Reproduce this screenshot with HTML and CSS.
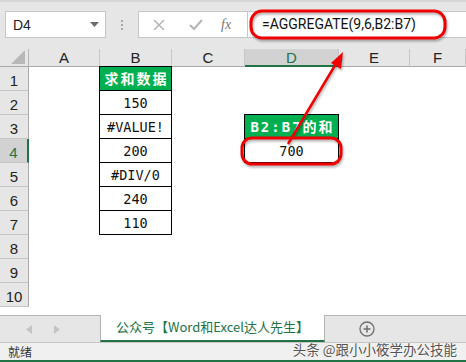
FILE: index.html
```html
<!DOCTYPE html>
<html lang="zh-CN">
<head>
    <meta charset="UTF-8">
    <title>AGGREGATE</title>
    <link rel="stylesheet" href="styles.css">
</head>
<body>
<div id="app">
    <div class="formula-bar">
        <div class="name-box">
            <span>D4</span>
            <svg width="9" height="5" viewBox="0 0 9 5"><path d="M0 0H9L4.5 5Z" fill="#6b6b6b"/></svg>
        </div>
        <div class="grip"><i></i><i></i><i></i></div>
        <div class="fx-box">
            <div class="fx-btns">
                <svg width="12" height="12" viewBox="0 0 12 12"><path d="M1 1L11 11M11 1L1 11" stroke="#b4b4b4" stroke-width="1.5"/></svg>
                <svg width="14" height="12" viewBox="0 0 14 12"><path d="M1 6L5 10L13 1" stroke="#b4b4b4" stroke-width="2" fill="none"/></svg>
                <span class="fx">fx</span>
            </div>
            <div class="formula">=AGGREGATE(9,6,B2:B7)</div>
        </div>
    </div>

    <div class="sheet">
        <div class="corner"><svg width="14" height="14" viewBox="0 0 14 14"><path d="M14 0V14H0Z" fill="#b8b8b8"/></svg></div>
        <div class="col-head">A</div>
        <div class="col-head">B</div>
        <div class="col-head">C</div>
        <div class="col-head active">D</div>
        <div class="col-head">E</div>
        <div class="col-head">F</div>

        <div class="row-head">1</div><div class="cell"></div><div class="cell box top title">求和数据</div><div class="cell"></div><div class="cell"></div><div class="cell"></div><div class="cell"></div>
        <div class="row-head">2</div><div class="cell"></div><div class="cell box">150</div><div class="cell"></div><div class="cell"></div><div class="cell"></div><div class="cell"></div>
        <div class="row-head">3</div><div class="cell"></div><div class="cell box">#VALUE!</div><div class="cell"></div><div class="cell box top title">B2:B7的和</div><div class="cell"></div><div class="cell"></div>
        <div class="row-head active">4</div><div class="cell"></div><div class="cell box">200</div><div class="cell"></div><div class="cell box">700</div><div class="cell"></div><div class="cell"></div>
        <div class="row-head">5</div><div class="cell"></div><div class="cell box">#DIV/0</div><div class="cell"></div><div class="cell"></div><div class="cell"></div><div class="cell"></div>
        <div class="row-head">6</div><div class="cell"></div><div class="cell box">240</div><div class="cell"></div><div class="cell"></div><div class="cell"></div><div class="cell"></div>
        <div class="row-head">7</div><div class="cell"></div><div class="cell box">110</div><div class="cell"></div><div class="cell"></div><div class="cell"></div><div class="cell"></div>
        <div class="row-head">8</div><div class="cell"></div><div class="cell"></div><div class="cell"></div><div class="cell"></div><div class="cell"></div><div class="cell"></div>
        <div class="row-head">9</div><div class="cell"></div><div class="cell"></div><div class="cell"></div><div class="cell"></div><div class="cell"></div><div class="cell"></div>
        <div class="row-head">10</div><div class="cell"></div><div class="cell"></div><div class="cell"></div><div class="cell"></div><div class="cell"></div><div class="cell"></div>
    </div>

    <div class="tabs">
        <div class="nav">
            <svg width="6" height="9" viewBox="0 0 6 9"><path d="M6 0V9L0 4.5Z" fill="#c4c4c4"/></svg>
            <svg width="6" height="9" viewBox="0 0 6 9"><path d="M0 0V9L6 4.5Z" fill="#c4c4c4"/></svg>
        </div>
        <div class="tab">公众号【Word和Excel达人先生】</div>
        <div class="tab-rest">
            <svg width="16" height="16" viewBox="0 0 16 16"><circle cx="8" cy="8" r="7" fill="none" stroke="#6e6e6e" stroke-width="1.3"/><path d="M8 4.5V11.5M4.5 8H11.5" stroke="#6e6e6e" stroke-width="1.5"/></svg>
        </div>
    </div>

    <div class="status">
        <span>就绪</span>
        <span class="mark">头条 @跟小小筱学办公技能</span>
    </div>

    <!-- 红色标注 -->
    <svg class="notes" width="466" height="362" viewBox="0 0 466 362">
        <g fill="none" stroke="#f00000" stroke-width="3">
            <rect x="251" y="11" width="194" height="27" rx="11"/>
            <rect x="242" y="138" width="99" height="26" rx="10"/>
            <path d="M288 144L337 62" stroke-width="2.5"/>
        </g>
        <path d="M343 52L331 63L341 69Z" fill="#f00000"/>
    </svg>
</div>
</body>
</html>
```

FILE: styles.css
```css
*{
    margin: 0;
    padding: 0;
    box-sizing: border-box;
}
body{
    width: 466px;
    height: 362px;
    overflow: hidden;
    background: #fff;
    font-family: "Liberation Sans", "Noto Sans CJK SC", sans-serif;
}
#app{
    position: relative;
    width: 466px;
    height: 362px;
    display: flex;
    flex-direction: column;
}

/* 编辑栏 */
.formula-bar{
    height: 49px;
    background: #e6e6e6;
    border-top: 2px solid #d6d6d6;
    display: flex;
    align-items: flex-start;
    padding: 9px 0 0 5px;
}
.name-box{
    width: 101px;
    height: 27px;
    background: #fff;
    border: 1px solid #c6c6c6;
    display: flex;
    align-items: center;
    justify-content: space-between;
    padding: 0 6px 0 7px;
    font-size: 14px;
    color: #222;
}
.grip{
    width: 32px;
    height: 27px;
    display: flex;
    flex-direction: column;
    align-items: center;
    justify-content: center;
    gap: 2px;
}
.grip i{
    width: 2px;
    height: 2px;
    background: #a8a8a8;
}
.fx-box{
    flex: 1;
    height: 27px;
    background: #fff;
    border: 1px solid #c6c6c6;
    border-right: none;
    display: flex;
}
.fx-btns{
    width: 109px;
    border-right: 1px solid #c6c6c6;
    display: flex;
    align-items: center;
    padding-left: 14px;
    gap: 24px;
}
.fx{
    font-family: "Liberation Serif", serif;
    font-style: italic;
    font-size: 14px;
    color: #777;
    margin-left: -6px;
}
.formula{
    padding-left: 14px;
    font-family: Roboto, sans-serif;
    font-size: 14px;
    line-height: 25px;
    color: #111;
}

/* 表格 */
.sheet{
    height: 262px;
    overflow: hidden;
    display: grid;
    grid-template-columns: 29px 71px 72px 73px 94px 71px 56px;
    grid-template-rows: 18px repeat(10, 24px);
    align-content: start;
}
.corner{
    background: #e6e6e6;
    border-right: 1px solid #b4b4b4;
    border-bottom: 1px solid #a8a8a8;
    display: flex;
    align-items: flex-end;
    justify-content: flex-end;
    padding: 0 3px 2px 0;
}
.col-head{
    background: #e6e6e6;
    border-right: 1px solid #c6c6c6;
    border-bottom: 1px solid #a8a8a8;
    text-align: center;
    font-size: 15px;
    line-height: 17px;
    color: #222;
}
.col-head.active{
    background: #d2d2d2;
    border-bottom: 2px solid #217346;
    color: #217346;
}
.row-head{
    background: #e6e6e6;
    border-right: 1px solid #a8a8a8;
    border-bottom: 1px solid #c6c6c6;
    text-align: center;
    font-size: 15px;
    line-height: 28px;
    color: #222;
}
.row-head.active{
    background: #d2d2d2;
    border-right: 2px solid #217346;
    color: #217346;
}
.cell{
    background: #fff;
    text-align: center;
    font-family: "DejaVu Sans Mono", "Noto Sans CJK SC", monospace;
    font-size: 13.5px;
    line-height: 26px;
    color: #111;
}
.box{
    border-left: 1px solid #000;
    border-right: 1px solid #000;
    border-bottom: 1px solid #000;
    margin-left: -1px;
    line-height: 25px;
}
.box.top{
    border-top: 1px solid #000;
    margin-top: -1px;
}
.title{
    background: #00b050;
    color: #fff;
    font-weight: bold;
    font-size: 14px;
    letter-spacing: 2px;
    text-indent: 2px;
}

/* 工作表标签 */
.tabs{
    margin-top: 4px;
    height: 28px;
    display: flex;
    background: #e6e6e6;
    border-top: 1px solid #b4b4b4;
    border-bottom: 1px solid #c6c6c6;
}
.nav{
    width: 100px;
    display: flex;
    align-items: center;
    padding-left: 26px;
    gap: 22px;
}
.tab{
    width: 225px;
    margin-top: -1px;
    background: #fff;
    border-left: 1px solid #b4b4b4;
    border-right: 1px solid #b4b4b4;
    border-bottom: 2px solid #217346;
    font-family: "Noto Sans CJK SC", sans-serif;
    font-size: 13px;
    line-height: 24px;
    color: #217346;
    padding-left: 15px;
}
.tab-rest{
    flex: 1;
    display: flex;
    align-items: center;
    padding-left: 34px;
}

/* 状态栏 */
.status{
    flex: 1;
    background: #f0f0f0;
    border-bottom: 2px solid #217346;
    display: flex;
    justify-content: space-between;
    align-items: center;
    padding: 0 9px 0 8px;
    font-family: "Noto Sans CJK SC", sans-serif;
    font-size: 12px;
    color: #333;
}
.mark{
    font-size: 13.5px;
    color: #555;
    margin-top: -5px;
    text-shadow: 0 0 2px #fff;
}

.notes{
    position: absolute;
    left: 0;
    top: 0;
    filter: drop-shadow(1px 2px 1px rgba(0,0,0,0.3));
}
```
